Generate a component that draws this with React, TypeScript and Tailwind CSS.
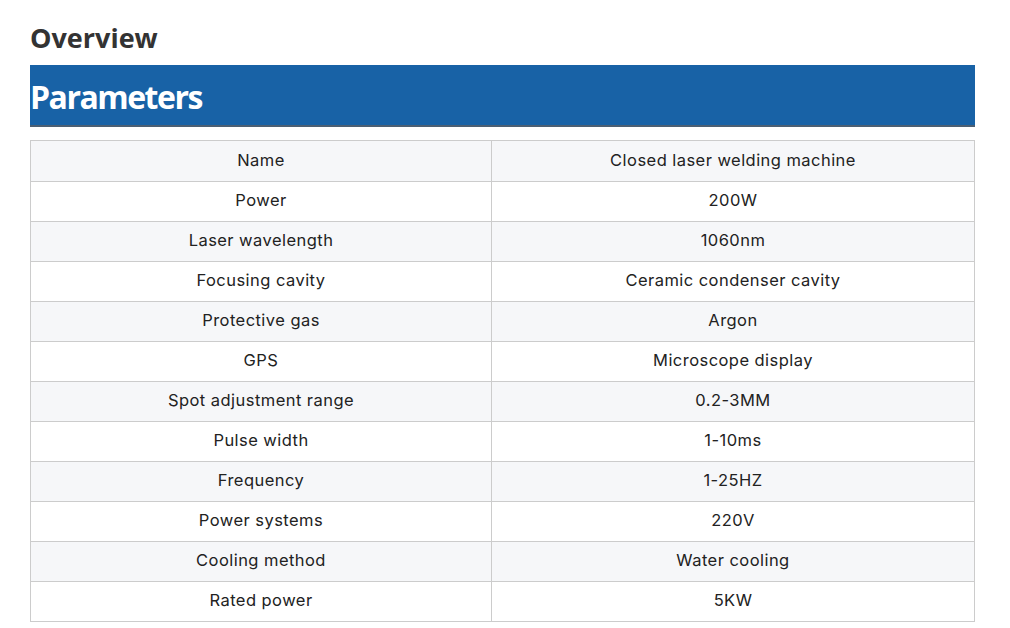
const rows: [string, string][] = [
  ["Name", "Closed laser welding machine"],
  ["Power", "200W"],
  ["Laser wavelength", "1060nm"],
  ["Focusing cavity", "Ceramic condenser cavity"],
  ["Protective gas", "Argon"],
  ["GPS", "Microscope display"],
  ["Spot adjustment range", "0.2-3MM"],
  ["Pulse width", "1-10ms"],
  ["Frequency", "1-25HZ"],
  ["Power systems", "220V"],
  ["Cooling method", "Water cooling"],
  ["Rated power", "5KW"],
];

const App = () => {
  return (
    <div className="min-h-screen bg-white pl-[30px] pr-[35px] pt-[21px]">
      <h2 className="font-['Open_Sans',sans-serif] text-[27px] font-bold leading-[34px] text-[#333]">
        Overview
      </h2>
      <div className="mt-[10px] flex h-[62px] items-center border-b-2 border-[#4b5f73] bg-[#1862a6] pt-1">
        <h3 className="font-['Open_Sans',sans-serif] text-[32px] font-bold tracking-[-1.5px] text-white">
          Parameters
        </h3>
      </div>
      <div className="mt-[13px] border border-[#ccc] font-['Inter',sans-serif] text-[16.5px] tracking-[0.45px] text-[#222]">
        {rows.map(([name, value], i) => (
          <div
            key={name}
            className={
              "grid h-10 grid-cols-[461px_1fr] " +
              (i % 2 === 0 ? "bg-[#f6f7f9]" : "bg-white") +
              (i > 0 ? " border-t border-[#ccc]" : "")
            }
          >
            <div className="flex items-center justify-center border-r border-[#ccc] pb-0.5">{name}</div>
            <div className="flex items-center justify-center pb-0.5">{value}</div>
          </div>
        ))}
      </div>
    </div>
  );
};

export default App;
